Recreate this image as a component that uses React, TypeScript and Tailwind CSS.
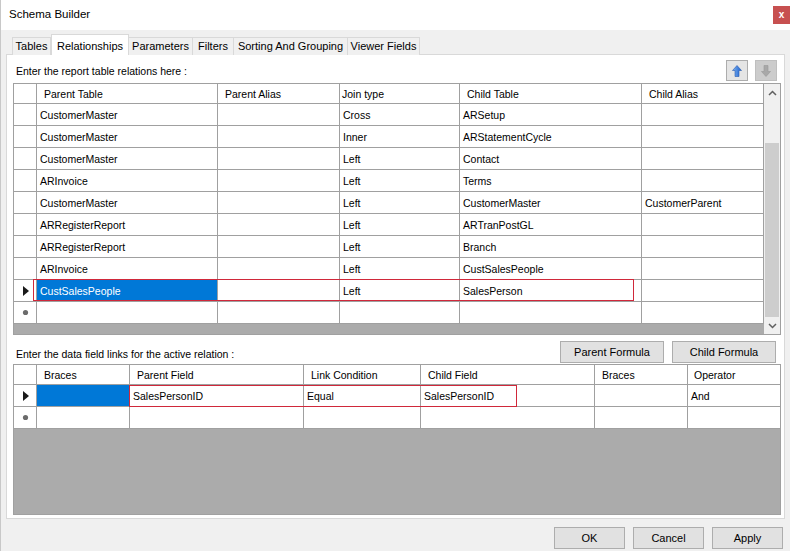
import React from "react";

const B = "border-[#a0a0a0]";

const w1 = ["w-[181px]", "w-[122px]", "w-[120px]", "w-[182px]", "w-[122px]"];
const h1pl = ["pl-[7px]", "pl-[7px]", "pl-[2px]", "pl-[7px]", "pl-[7px]"];
const head1 = ["Parent Table", "Parent Alias", "Join type", "Child Table", "Child Alias"];
const rows1 = [
  ["CustomerMaster", "", "Cross", "ARSetup", ""],
  ["CustomerMaster", "", "Inner", "ARStatementCycle", ""],
  ["CustomerMaster", "", "Left", "Contact", ""],
  ["ARInvoice", "", "Left", "Terms", ""],
  ["CustomerMaster", "", "Left", "CustomerMaster", "CustomerParent"],
  ["ARRegisterReport", "", "Left", "ARTranPostGL", ""],
  ["ARRegisterReport", "", "Left", "Branch", ""],
  ["ARInvoice", "", "Left", "CustSalesPeople", ""],
  ["CustSalesPeople", "", "Left", "SalesPerson", ""],
];

const w2 = ["w-[93px]", "w-[174px]", "w-[117px]", "w-[174px]", "w-[93px]", "w-[92px]"];
const h2pl = ["pl-[7px]", "pl-[7px]", "pl-[7px]", "pl-[7px]", "pl-[7px]", "pl-[6px]"];
const head2 = ["Braces", "Parent Field", "Link Condition", "Child Field", "Braces", "Operator"];
const row2 = ["", "SalesPersonID", "Equal", "SalesPersonID", "", "And"];

function Tri() {
  return (
    <svg width="6" height="10" viewBox="0 0 6 10">
      <path d="M0 0 L6 5 L0 10 Z" fill="#1a1a1a" />
    </svg>
  );
}

function Star() {
  return (
    <svg width="7" height="7" viewBox="0 0 7 7">
      <circle cx="3.5" cy="3.5" r="2.6" fill="#6b6b6b" />
    </svg>
  );
}

function RowHead({ children }: { children?: React.ReactNode }) {
  return (
    <div className={`w-[23px] shrink-0 h-full border-r ${B} flex items-center justify-center pl-[1px]`}>
      {children}
    </div>
  );
}

function Cell({ w, last, sel, children, pl }: { w: string; last?: boolean; sel?: boolean; children?: React.ReactNode; pl?: string }) {
  return (
    <div
      className={`${w} shrink-0 h-full flex items-center pt-[2px] whitespace-nowrap overflow-hidden ${pl ?? "pl-[3px]"} ${last ? "" : `border-r ${B}`} ${sel ? "bg-[#0078d7] text-white" : ""}`}
    >
      {children}
    </div>
  );
}

function Btn({ w, children }: { w: string; children: React.ReactNode }) {
  return (
    <div className={`${w} h-[22px] shrink-0 flex items-center justify-center pt-[1px] bg-[#e1e1e1] border border-[#adadad] text-[11px]`}>
      {children}
    </div>
  );
}

export default function App() {
  return (
    <div className="w-[790px] h-[551px] bg-[#f0f0f0] flex flex-col font-['Liberation_Sans',Arial,sans-serif] text-[10.5px] text-black border-l border-[#c8c8c8] overflow-hidden">
      {/* Title bar */}
      <div className="h-[30px] bg-white flex items-start shrink-0">
        <div className="pl-[8px] pt-[7px] text-[11.5px] leading-[14px]">Schema Builder</div>
        <div className="ml-auto mt-[6px] w-[17px] h-[18px] bg-[#c75050] text-white flex items-center justify-center text-[10px] font-bold leading-none">
          x
        </div>
      </div>

      {/* Tabs */}
      <div className="flex items-end pl-[11px] mt-[5px] h-[20px] relative z-10 -mb-px text-[11px]">
        <div className="h-[18px] px-[3px] flex items-center border border-b-0 border-[#d9d9d9] bg-[#f0f0f0] w-[39px] justify-center">Tables</div>
        <div className="h-[21px] w-[78px] flex items-start pt-[3px] justify-center border border-b-0 border-[#d9d9d9] bg-white">Relationships</div>
        <div className="h-[18px] w-[64px] flex items-center justify-center border border-b-0 border-l-0 border-[#d9d9d9] bg-[#f0f0f0]">Parameters</div>
        <div className="h-[18px] w-[41px] flex items-center justify-center border border-b-0 border-l-0 border-[#d9d9d9] bg-[#f0f0f0]">Filters</div>
        <div className="h-[18px] w-[114px] flex items-center justify-center border border-b-0 border-l-0 border-[#d9d9d9] bg-[#f0f0f0]">Sorting And Grouping</div>
        <div className="h-[18px] w-[72px] flex items-center justify-center border border-b-0 border-l-0 border-[#d9d9d9] bg-[#f0f0f0]">Viewer Fields</div>
      </div>

      {/* Panel */}
      <div className="mx-[5px] h-[465px] bg-white border border-[#d9d9d9] flex flex-col">
        <div className="mt-[5px] h-[21px] flex items-center">
          <div className="pl-[9px] pt-[3px]">Enter the report table relations here :</div>
          <div className="ml-auto flex gap-[7px] pr-[7px]">
            <div className="w-[22px] h-[21px] bg-[#e5e5e5] border border-[#adadad] flex items-center justify-center">
              <svg width="10" height="12" viewBox="0 0 10 12">
                <defs>
                  <linearGradient id="ug" x1="0" y1="0" x2="1" y2="0">
                    <stop offset="0" stopColor="#7fb3f0" />
                    <stop offset="1" stopColor="#1a5fcf" />
                  </linearGradient>
                </defs>
                <path d="M5 0.5 L9.5 5.5 L7 5.5 L7 11.5 L3 11.5 L3 5.5 L0.5 5.5 Z" fill="url(#ug)" stroke="#2a5db0" strokeWidth="0.6" />
              </svg>
            </div>
            <div className="w-[22px] h-[21px] bg-[#cccccc] border border-[#bfbfbf] flex items-center justify-center">
              <svg width="10" height="12" viewBox="0 0 10 12">
                <path d="M3 0.5 L7 0.5 L7 6.5 L9.5 6.5 L5 11.5 L0.5 6.5 L3 6.5 Z" fill="#a8a8a8" stroke="#999" strokeWidth="0.6" />
              </svg>
            </div>
          </div>
        </div>

        {/* Grid 1 */}
        <div className={`mt-[2px] ml-[6px] w-[768px] h-[252px] border ${B} flex`}>
          <div className="w-[750px] flex flex-col">
            <div className={`flex h-[20px] border-b ${B} shrink-0`}>
              <RowHead />
              {head1.map((h, i) => (
                <Cell key={i} w={w1[i]} pl={h1pl[i]}>{h}</Cell>
              ))}
            </div>
            {rows1.map((r, ri) => {
              const sel = ri === rows1.length - 1;
              return (
                <div key={ri} className={`flex h-[22px] border-b ${B} shrink-0 relative`}>
                  <RowHead>{sel ? <Tri /> : null}</RowHead>
                  {r.map((c, ci) => (
                    <Cell key={ci} w={w1[ci]} sel={sel && ci === 0}>{c}</Cell>
                  ))}
                  {sel && (
                    <div className="absolute left-[19px] top-[-1px] w-[601px] h-[22px] border border-[#d0283a] pointer-events-none" />
                  )}
                </div>
              );
            })}
            <div className={`flex h-[22px] border-b ${B} shrink-0`}>
              <RowHead><Star /></RowHead>
              {w1.map((w, ci) => (
                <Cell key={ci} w={w} />
              ))}
            </div>
            <div className="flex-1 bg-[#ababab]" />
          </div>
          {/* Scrollbar */}
          <div className="w-[16px] flex flex-col bg-[#f0f0f0]">
            <div className="h-[17px] flex items-center justify-center">
              <svg width="9" height="6" viewBox="0 0 9 6">
                <path d="M1 5 L4.5 1.5 L8 5" fill="none" stroke="#606060" strokeWidth="1.5" />
              </svg>
            </div>
            <div className="flex-1 flex flex-col">
              <div className="h-[42px]" />
              <div className="h-[174px] bg-[#cdcdcd] mx-[1px]" />
            </div>
            <div className="h-[16px] flex items-center justify-center">
              <svg width="9" height="6" viewBox="0 0 9 6">
                <path d="M1 1 L4.5 4.5 L8 1" fill="none" stroke="#606060" strokeWidth="1.5" />
              </svg>
            </div>
          </div>
        </div>

        {/* Label 2 + formula buttons */}
        <div className="mt-[6px] h-[22px] flex items-center">
          <div className="pl-[9px] pt-[5px]">Enter the data field links for the active relation :</div>
          <div className="ml-auto flex gap-[8px] pr-[8px]">
            <Btn w="w-[104px]">Parent Formula</Btn>
            <Btn w="w-[104px]">Child Formula</Btn>
          </div>
        </div>

        {/* Grid 2 */}
        <div className={`mt-[1px] ml-[6px] w-[768px] h-[151px] border ${B} flex flex-col`}>
          <div className={`flex h-[20px] border-b ${B} shrink-0`}>
            <RowHead />
            {head2.map((h, i) => (
              <Cell key={i} w={w2[i]} pl={h2pl[i]} last={i === head2.length - 1}>{h}</Cell>
            ))}
          </div>
          <div className={`flex h-[22px] border-b ${B} shrink-0 relative`}>
            <RowHead><Tri /></RowHead>
            {row2.map((c, ci) => (
              <Cell key={ci} w={w2[ci]} sel={ci === 0} last={ci === row2.length - 1}>{c}</Cell>
            ))}
            <div className="absolute left-[115px] top-0 w-[388px] h-[22px] border border-[#d0283a] pointer-events-none" />
          </div>
          <div className={`flex h-[22px] border-b ${B} shrink-0`}>
            <RowHead><Star /></RowHead>
            {w2.map((w, ci) => (
              <Cell key={ci} w={w} last={ci === w2.length - 1} />
            ))}
          </div>
          <div className="flex-1 bg-[#ababab]" />
        </div>
      </div>

      {/* Bottom buttons */}
      <div className="mt-[8px] flex justify-end gap-[8px] pr-[7px]">
        <Btn w="w-[71px]">OK</Btn>
        <Btn w="w-[71px]">Cancel</Btn>
        <Btn w="w-[71px]">Apply</Btn>
      </div>
    </div>
  );
}
